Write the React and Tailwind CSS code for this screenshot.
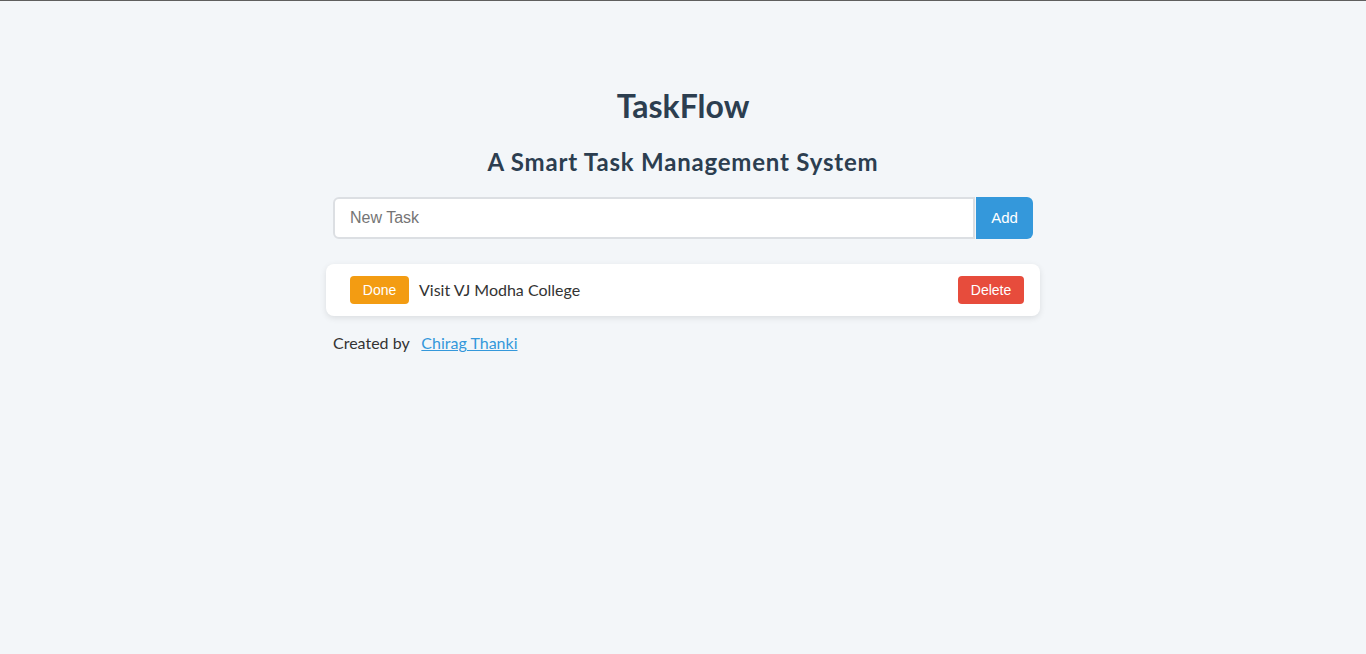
import React, { useState } from "react";

const App = () => {
  const [tasks] = useState([{ id: 1, text: "Visit VJ Modha College" }]);

  return (
    <div className="min-h-[654px] border-t border-[#5f5f5f] bg-[#f3f6f9] font-['Lato',sans-serif] text-[#2c3e50]">
      <div className="mx-auto w-[700px] pt-[81px]">
        <h1 className="text-center text-[32px] font-bold leading-[48px]">TaskFlow</h1>
        <h2 className="mt-[20px] text-center text-[24px] font-bold leading-[24px] tracking-[0.8px]">
          A Smart Task Management System
        </h2>

        <div className="mt-[23px] flex">
          <input
            type="text"
            placeholder="New Task"
            className="h-[42px] flex-1 rounded-l-md border-2 border-[#dcdfe3] bg-white px-[15px] font-['Liberation_Sans',Arial,sans-serif] text-[16px] text-[#333] outline-none placeholder:text-[#757575]"
          />
          <button
            type="button"
            className="ml-px h-[42px] w-[57px] rounded-r-md bg-[#3498db] font-['Liberation_Sans',Arial,sans-serif] text-[15px] text-white"
          >
            Add
          </button>
        </div>

        <ul className="-mx-[7px] mt-[25px]">
          {tasks.map((task) => (
            <li
              key={task.id}
              className="flex h-[52px] items-center rounded-lg bg-white pl-[24px] pr-[16px] shadow-[0_2px_6px_rgba(0,0,0,0.1)]"
            >
              <button
                type="button"
                className="h-[28px] w-[59px] rounded bg-[#f39c12] font-['Liberation_Sans',Arial,sans-serif] text-[14px] text-white"
              >
                Done
              </button>
              <span className="ml-[10px] flex-1 text-[16px] text-[#333]">{task.text}</span>
              <button
                type="button"
                className="h-[28px] w-[66px] rounded bg-[#e74c3c] font-['Liberation_Sans',Arial,sans-serif] text-[14px] text-white"
              >
                Delete
              </button>
            </li>
          ))}
        </ul>

        <p className="mt-[15px] text-[16px] text-[#333]">
          Created by{" "}
          <a href="#" className="ml-[8px] text-[#3498db] underline">
            Chirag Thanki
          </a>
        </p>
      </div>
    </div>
  );
};

export default App;
